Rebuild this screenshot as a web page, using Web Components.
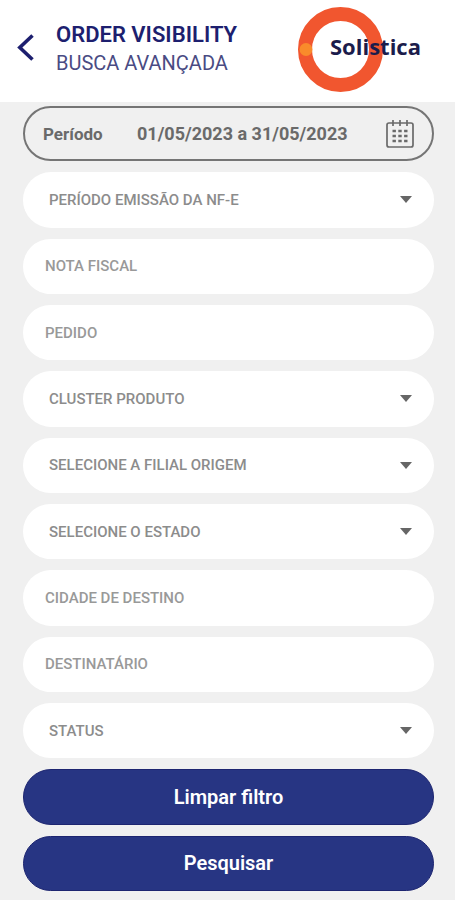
<!DOCTYPE html>
<html lang="pt-BR">
<head>
<meta charset="utf-8">
<meta name="viewport" content="width=device-width, initial-scale=1">
<title>Order Visibility</title>
<style>
  body {
    margin: 0;
    font-family: Roboto, "Liberation Sans", sans-serif;
    background: #f0f0f0;
  }
</style>
</head>
<body>
<search-page>
  <page-header slot="header" heading="ORDER VISIBILITY" subheading="BUSCA AVANÇADA">
    <solistica-logo></solistica-logo>
  </page-header>
  <period-field label="Período" value="01/05/2023 a 31/05/2023"></period-field>
  <select-field label="PERÍODO EMISSÃO DA NF-E"></select-field>
  <text-field label="NOTA FISCAL"></text-field>
  <text-field label="PEDIDO"></text-field>
  <select-field label="CLUSTER PRODUTO"></select-field>
  <select-field label="SELECIONE A FILIAL ORIGEM"></select-field>
  <select-field label="SELECIONE O ESTADO"></select-field>
  <text-field label="CIDADE DE DESTINO"></text-field>
  <text-field label="DESTINATÁRIO"></text-field>
  <select-field label="STATUS"></select-field>
  <pill-button>Limpar filtro</pill-button>
  <pill-button>Pesquisar</pill-button>
</search-page>

<script>
'use strict';

(function() {
  class SearchPage extends HTMLElement {
    constructor() {
      super();
      const shadow = this.attachShadow({ mode: 'open' });
      shadow.innerHTML = `
        <style>
          :host {
            display: flex;
            flex-direction: column;
            min-height: 100vh;
          }
          main {
            flex: 1;
            display: grid;
            grid-auto-rows: minmax(48px, 1fr);
            gap: 11px;
            padding: 4px 21px 9px 23px;
          }
        </style>
        <slot name="header"></slot>
        <main><slot></slot></main>
      `;
    }
  }

  class PageHeader extends HTMLElement {
    constructor() {
      super();
      const shadow = this.attachShadow({ mode: 'open' });
      shadow.innerHTML = `
        <style>
          :host {
            display: block;
            background: #fff;
            color: #1d1f6f;
          }
          header {
            display: flex;
            align-items: center;
            min-height: 102px;
            box-sizing: border-box;
            padding: 0 32px 4px 16px;
          }
          button {
            display: flex;
            padding: 0;
            margin-right: 20px;
            border: none;
            background: none;
            color: inherit;
            cursor: pointer;
          }
          .titles {
            flex: 1;
          }
          h1, p {
            margin: 0;
            line-height: 28px;
          }
          h1 {
            font-size: 22px;
            font-weight: 600;
          }
          p {
            font-size: 20px;
            color: #4a4b83;
          }
        </style>
        <header>
          <button type="button" aria-label="Voltar">
            <svg width="20" height="30" viewBox="0 0 20 30" fill="none" stroke="currentColor" stroke-width="3.6">
              <path d="M16.500 1.500 L3.800 13.500 L16.500 25.500"/>
            </svg>
          </button>
          <div class="titles">
            <h1>${this.getAttribute('heading')}</h1>
            <p>${this.getAttribute('subheading')}</p>
          </div>
          <slot></slot>
        </header>
      `;
    }
  }

  class SolisticaLogo extends HTMLElement {
    constructor() {
      super();
      const shadow = this.attachShadow({ mode: 'open' });
      shadow.innerHTML = `
        <style>
          :host {
            display: block;
            flex: none;
          }
          svg {
            display: block;
          }
          text {
            font-family: "Open Sans", "Noto Sans", sans-serif;
            font-size: 22px;
            font-weight: 700;
            fill: #1b1c4b;
          }
        </style>
        <svg width="125" height="86" viewBox="0 0 125 86">
          <circle cx="42.500" cy="43.500" r="35.500" fill="none" stroke="#f1562f" stroke-width="14"/>
          <circle cx="8" cy="43.500" r="6.500" fill="#f98b2b"/>
          <text x="32" y="49">Solistica</text>
        </svg>
      `;
    }
  }

  class PeriodField extends HTMLElement {
    constructor() {
      super();
      const shadow = this.attachShadow({ mode: 'open' });
      shadow.innerHTML = `
        <style>
          :host {
            display: flex;
            align-items: center;
            box-sizing: border-box;
            padding: 0 17px 0 18px;
            border: 2px solid #757575;
            border-radius: 28px;
            color: #6a6a6a;
          }
          label, input {
            font: 700 17px/24px Roboto, "Liberation Sans", sans-serif;
            color: inherit;
          }
          label {
            flex: none;
            width: 94px;
          }
          input {
            flex: 1;
            min-width: 0;
            padding: 0;
            border: none;
            background: none;
            outline: none;
            font-size: 18px;
          }
          button {
            display: flex;
            padding: 0;
            border: none;
            background: none;
            color: inherit;
            cursor: pointer;
          }
        </style>
        <label for="period">${this.getAttribute('label')}</label>
        <input id="period" type="text" readonly value="${this.getAttribute('value')}">
        <button type="button" aria-label="Abrir calendário">
          <svg width="30" height="30" viewBox="0 0 30 30" fill="none" stroke="currentColor" stroke-width="1.7">
            <rect x="2" y="4" width="26" height="24" rx="2"/>
            <path d="M8 1v6M15 1v6M22 1v6"/>
            <path stroke-width="2.6" stroke-dasharray="3.4 2.4" d="M7.5 12h15M7.5 17h15M7.5 22h15"/>
          </svg>
        </button>
      `;
    }
  }

  class TextField extends HTMLElement {
    constructor() {
      super();
      const label = this.getAttribute('label');
      const shadow = this.attachShadow({ mode: 'open' });
      shadow.innerHTML = `
        <style>
          :host {
            display: grid;
          }
          input {
            width: 100%;
            box-sizing: border-box;
            padding: 0 22px;
            border: none;
            border-radius: 28px;
            background: #fff;
            outline: none;
            font: 500 15px/20px Roboto, "Liberation Sans", sans-serif;
            color: #666;
          }
          input::placeholder {
            color: #999;
            opacity: 1;
          }
        </style>
        <input type="text" aria-label="${label}" placeholder="${label}">
      `;
    }
  }

  class SelectField extends HTMLElement {
    constructor() {
      super();
      const label = this.getAttribute('label');
      const shadow = this.attachShadow({ mode: 'open' });
      shadow.innerHTML = `
        <style>
          :host {
            display: grid;
            align-items: center;
          }
          select, svg {
            grid-area: 1 / 1;
          }
          select {
            appearance: none;
            width: 100%;
            height: 100%;
            box-sizing: border-box;
            padding: 0 44px 0 26px;
            border: none;
            border-radius: 28px;
            background: #fff;
            outline: none;
            font: 500 15px/20px Roboto, "Liberation Sans", sans-serif;
            color: #8c8c8c;
          }
          svg {
            justify-self: end;
            margin-right: 22px;
            pointer-events: none;
          }
        </style>
        <select aria-label="${label}">
          <option>${label}</option>
        </select>
        <svg width="12" height="7" viewBox="0 0 12 7" fill="#666">
          <path d="M0 0h12L6 7z"/>
        </svg>
      `;
    }
  }

  class PillButton extends HTMLElement {
    constructor() {
      super();
      const shadow = this.attachShadow({ mode: 'open' });
      shadow.innerHTML = `
        <style>
          :host {
            display: grid;
          }
          button {
            padding: 0;
            border: 1px solid #1d2570;
            border-radius: 28px;
            background: #273583;
            color: #fff;
            font: 600 20px/24px Roboto, "Liberation Sans", sans-serif;
            cursor: pointer;
          }
        </style>
        <button type="button"><slot></slot></button>
      `;
    }
  }

  customElements.define('search-page', SearchPage);
  customElements.define('page-header', PageHeader);
  customElements.define('solistica-logo', SolisticaLogo);
  customElements.define('period-field', PeriodField);
  customElements.define('text-field', TextField);
  customElements.define('select-field', SelectField);
  customElements.define('pill-button', PillButton);
})();
</script>
</body>
</html>
